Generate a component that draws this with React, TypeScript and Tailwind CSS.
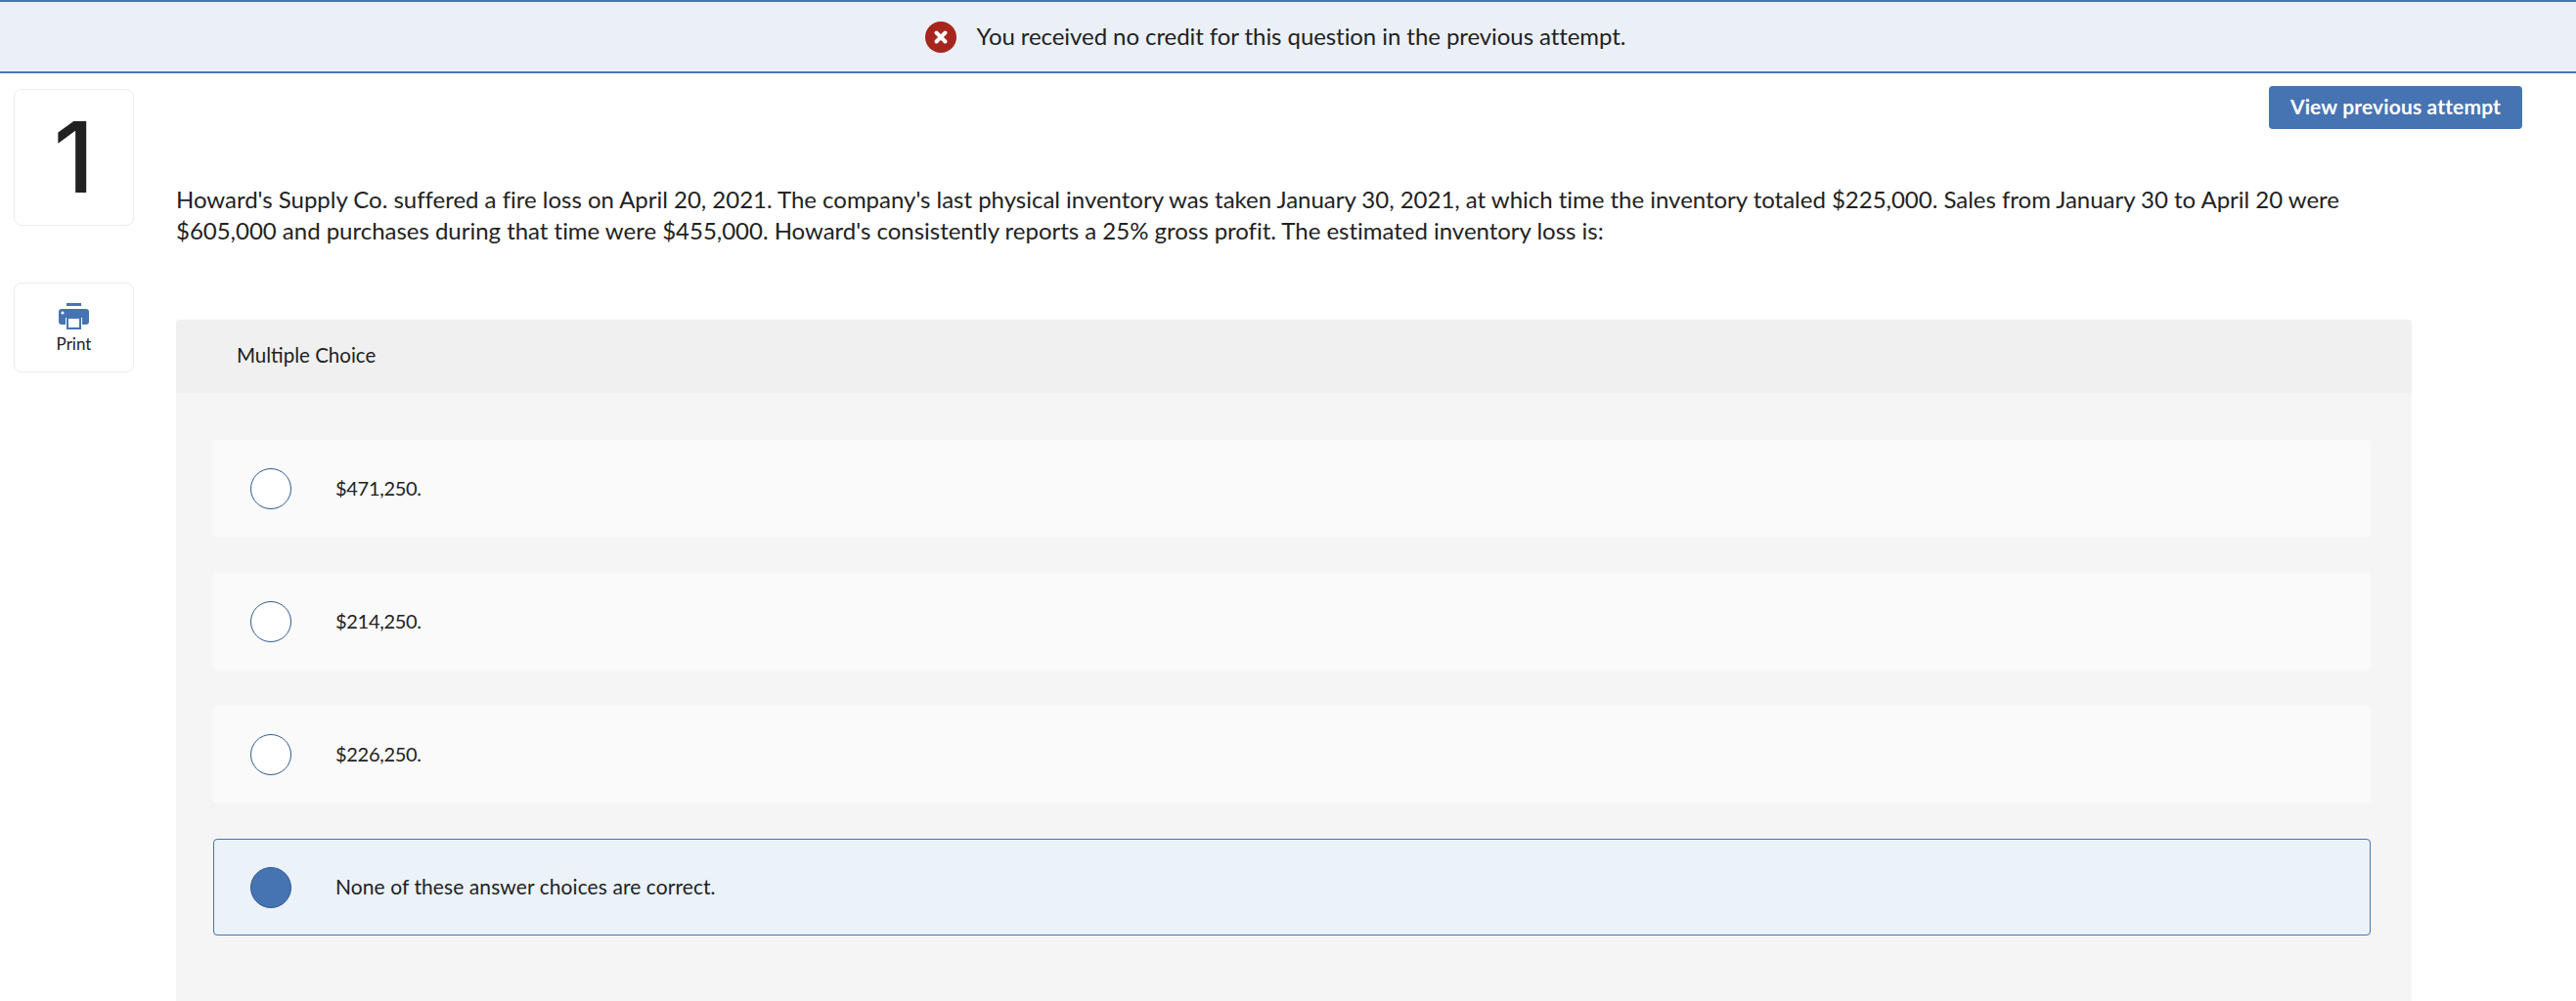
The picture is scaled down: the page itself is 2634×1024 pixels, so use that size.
const font = "font-['Lato','Noto_Sans',sans-serif]";

function Radio({ selected }: { selected?: boolean }) {
  return (
    <span
      className={
        "block h-[42px] w-[42px] shrink-0 rounded-full border border-[#2f5c94] " +
        (selected ? "bg-[#4674b3]" : "bg-white")
      }
    />
  );
}

function Option({ label, selected }: { label: string; selected?: boolean }) {
  return (
    <div
      className={
        "flex h-[99px] items-center rounded " +
        (selected ? "border border-[#4674b3] bg-[#ebf2fa] pl-[37px]" : "bg-[#fafafa] pl-[38px]")
      }
    >
      <Radio selected={selected} />
      <span className={"mb-[2px] ml-[45px] text-[#222] " + (selected ? "text-[21px] tracking-[0.08px]" : "text-[20px] tracking-[-0.3px]")}>
        {label}
      </span>
    </div>
  );
}

export default function App() {
  return (
    <div className={"h-[1024px] overflow-hidden bg-white text-[#222] " + font}>
      <div className="flex h-[75px] items-center justify-center border-y-2 border-[#4674b3] bg-[#ebf0f8] pr-[26px]">
        <svg width="32" height="32" viewBox="0 0 32 32" className="mr-[21px]">
          <circle cx="16" cy="16" r="16" fill="#a6261d" />
          <path d="M11.5 11.5 20.5 20.5M20.5 11.5 11.5 20.5" stroke="#fff" strokeWidth="4" strokeLinecap="round" />
        </svg>
        <span className="mb-[2px] text-[24px] tracking-[-0.07px]">You received no credit for this question in the previous attempt.</span>
      </div>
      <div className="flex pl-[14px]">
        <div className="w-[123px] shrink-0 pt-[16px]">
          <div className="flex h-[140px] items-center justify-center rounded-lg border border-[#ececec] font-['Inter',sans-serif] text-[100px] font-medium leading-none text-[#222]">
            1
          </div>
          <div className="mt-[58px] flex h-[92px] flex-col items-center rounded-lg border border-[#ececec] pt-[20px]">
            <svg width="31" height="27" viewBox="0 0 31 27">
              <rect x="8" y="0" width="15" height="3" fill="#4674b3" />
              <path d="M3 6h25a3 3 0 0 1 3 3v10a3 3 0 0 1-3 3h-4v-7H7v7H3a3 3 0 0 1-3-3V9a3 3 0 0 1 3-3z" fill="#4674b3" />
              <circle cx="4" cy="10" r="1.5" fill="#fff" />
              <path d="M9 15h13v11H9z" fill="#fff" stroke="#4674b3" strokeWidth="2" />
            </svg>
            <span className="mt-[3px] text-[17px] leading-[24px]">Print</span>
          </div>
        </div>
        <div className="ml-[43px] flex-1 pr-[55px]">
          <div className="flex justify-end pt-[13px]">
            <button className="h-[44px] w-[259px] rounded bg-[#4674b3] pb-[2px] text-[21px] font-bold tracking-[0.15px] text-white">
              View previous attempt
            </button>
          </div>
          <p className="mt-[56px] w-[2260px] text-[24px] leading-[31.5px] tracking-[-0.02px]">
            Howard's Supply Co. suffered a fire loss on April 20, 2021. The company's last physical inventory was taken January 30, 2021, at which time the inventory totaled $225,000. Sales from January 30 to April 20 were $605,000 and purchases during that time were $455,000. Howard's consistently reports a 25% gross profit. The estimated inventory loss is:
          </p>
          <div className="mr-[113px] mt-[76px] rounded-t bg-[#f5f5f5] pb-[100px]">
            <div className="flex h-[75px] items-center rounded-t bg-[#f0f0f0] pb-[2px] pl-[62px] text-[20.5px]">
              Multiple Choice
            </div>
            <div className="flex flex-col gap-[37px] pl-[38px] pr-[42px] pt-[48px]">
              <Option label="$471,250." />
              <Option label="$214,250." />
              <Option label="$226,250." />
              <Option label="None of these answer choices are correct." selected />
            </div>
          </div>
        </div>
      </div>
    </div>
  );
}
